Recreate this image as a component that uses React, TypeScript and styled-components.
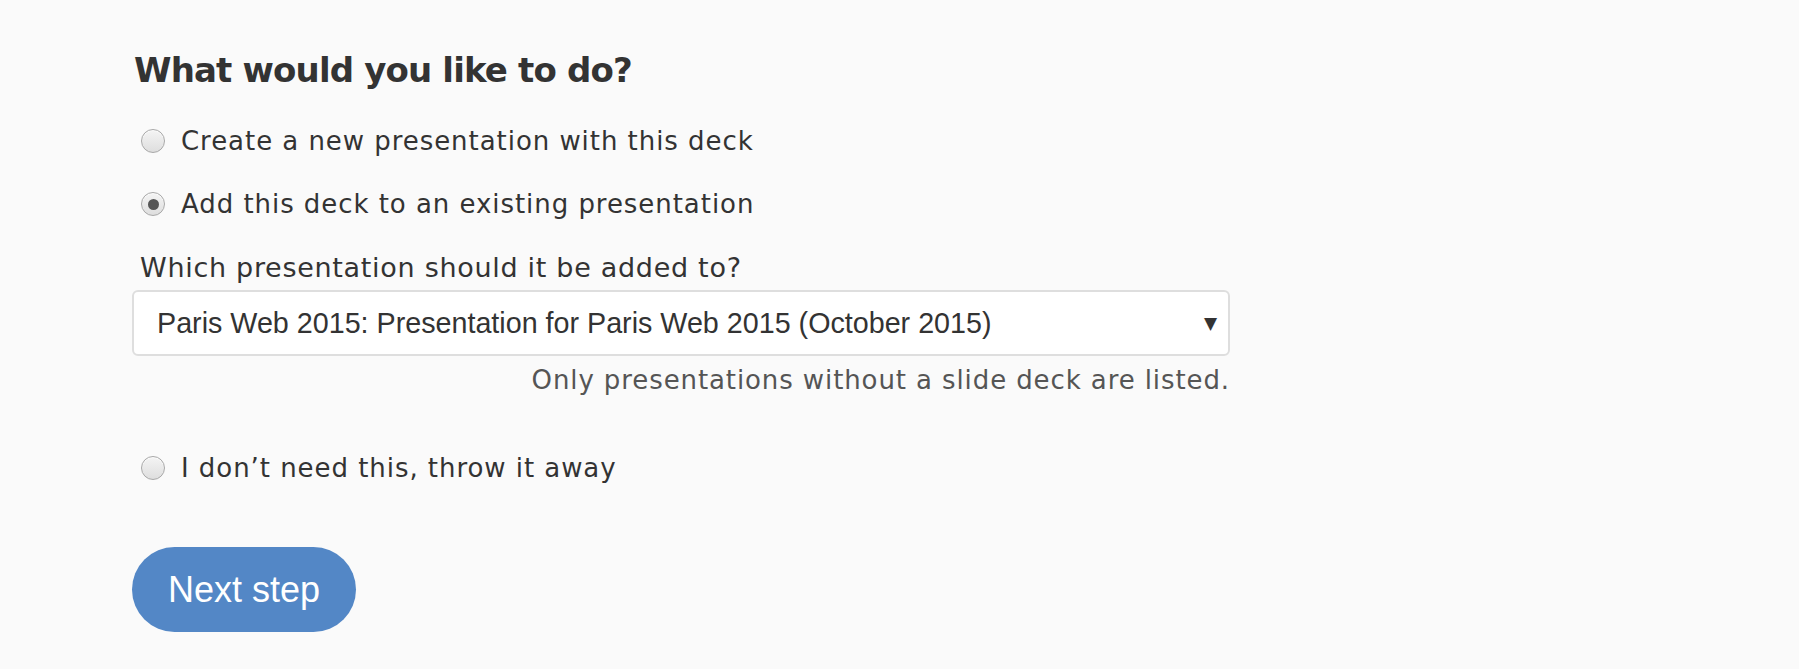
import React from "react";
import styled, { createGlobalStyle } from "styled-components";

const GlobalStyle = createGlobalStyle`
  html, body {
    margin: 0;
    padding: 0;
    background: #fafafa;
  }
  body {
    font-family: "DejaVu Sans", "Open Sans", sans-serif;
    color: #333;
  }
`;

const Page = styled.main`
  display: flex;
  flex-direction: column;
  align-items: flex-start;
  padding: 50px 0 0 132px;
`;

const Heading = styled.h2`
  margin: 0 0 31px 2px;
  font-family: "DejaVu Sans", sans-serif;
  font-weight: 700;
  font-size: 34px;
  line-height: 40px;
  letter-spacing: -0.85px;
  color: #333;
`;

const Option = styled.label<{ $gapAfter?: number }>`
  display: flex;
  align-items: center;
  gap: 16px;
  height: 40px;
  margin: 0 0 ${(p) => p.$gapAfter ?? 0}px 9px;
  font-size: 26px;
  line-height: 40px;
  letter-spacing: 0.95px;
  color: #333;
  cursor: pointer;
`;

const Radio = styled.span<{ $checked?: boolean }>`
  position: relative;
  flex: none;
  width: 22px;
  height: 22px;
  border-radius: 50%;
  border: 1px solid #a8a8a8;
  background: linear-gradient(#f4f4f4, #dedede);
  box-shadow: inset 0 1px 1px rgba(255, 255, 255, 0.8);

  &::after {
    content: "";
    display: ${(p) => (p.$checked ? "block" : "none")};
    position: absolute;
    left: 50%;
    top: 50%;
    width: 11px;
    height: 11px;
    margin: -5.5px 0 0 -5.5px;
    border-radius: 50%;
    background: #555;
  }
`;

const Field = styled.div`
  display: flex;
  flex-direction: column;
  width: 1098px;
  margin-bottom: 50px;
`;

const FieldLabel = styled.div`
  margin: 0 0 4px 8px;
  font-size: 27px;
  line-height: 36px;
  letter-spacing: 0.7px;
  color: #333;
`;

const SelectBox = styled.div`
  position: relative;
  display: flex;
  align-items: center;
  height: 62px;
  padding: 0 60px 0 23px;
  background: #fff;
  border: 2px solid #dedede;
  border-radius: 6px;
  font-family: "Liberation Sans", Arial, sans-serif;
  font-size: 28.7px;
  color: #333;
`;

const Arrow = styled.span`
  position: absolute;
  right: 11px;
  top: 50%;
  transform: translateY(-50%);
  font-family: "DejaVu Sans", sans-serif;
  font-size: 17px;
  color: #333;
`;

const Hint = styled.div`
  margin-top: 6px;
  text-align: right;
  font-size: 26px;
  line-height: 36px;
  letter-spacing: 0.9px;
  color: #555;
`;

const Button = styled.button`
  margin-top: 59px;
  width: 224px;
  height: 85px;
  border: none;
  border-radius: 43px;
  background: #5387c6;
  color: #fff;
  font-family: "Liberation Sans", Arial, sans-serif;
  font-size: 36px;
  cursor: pointer;
`;

export default function App() {
  return (
    <>
      <GlobalStyle />
      <Page>
        <Heading>What would you like to do?</Heading>
        <Option $gapAfter={23}>
          <Radio />
          Create a new presentation with this deck
        </Option>
        <Option $gapAfter={26}>
          <Radio $checked />
          Add this deck to an existing presentation
        </Option>
        <Field>
          <FieldLabel>Which presentation should it be added to?</FieldLabel>
          <SelectBox>
            Paris Web 2015: Presentation for Paris Web 2015 (October 2015)
            <Arrow>▼</Arrow>
          </SelectBox>
          <Hint>Only presentations without a slide deck are listed.</Hint>
        </Field>
        <Option>
          <Radio />
          I don’t need this, throw it away
        </Option>
        <Button>Next step</Button>
      </Page>
    </>
  );
}
